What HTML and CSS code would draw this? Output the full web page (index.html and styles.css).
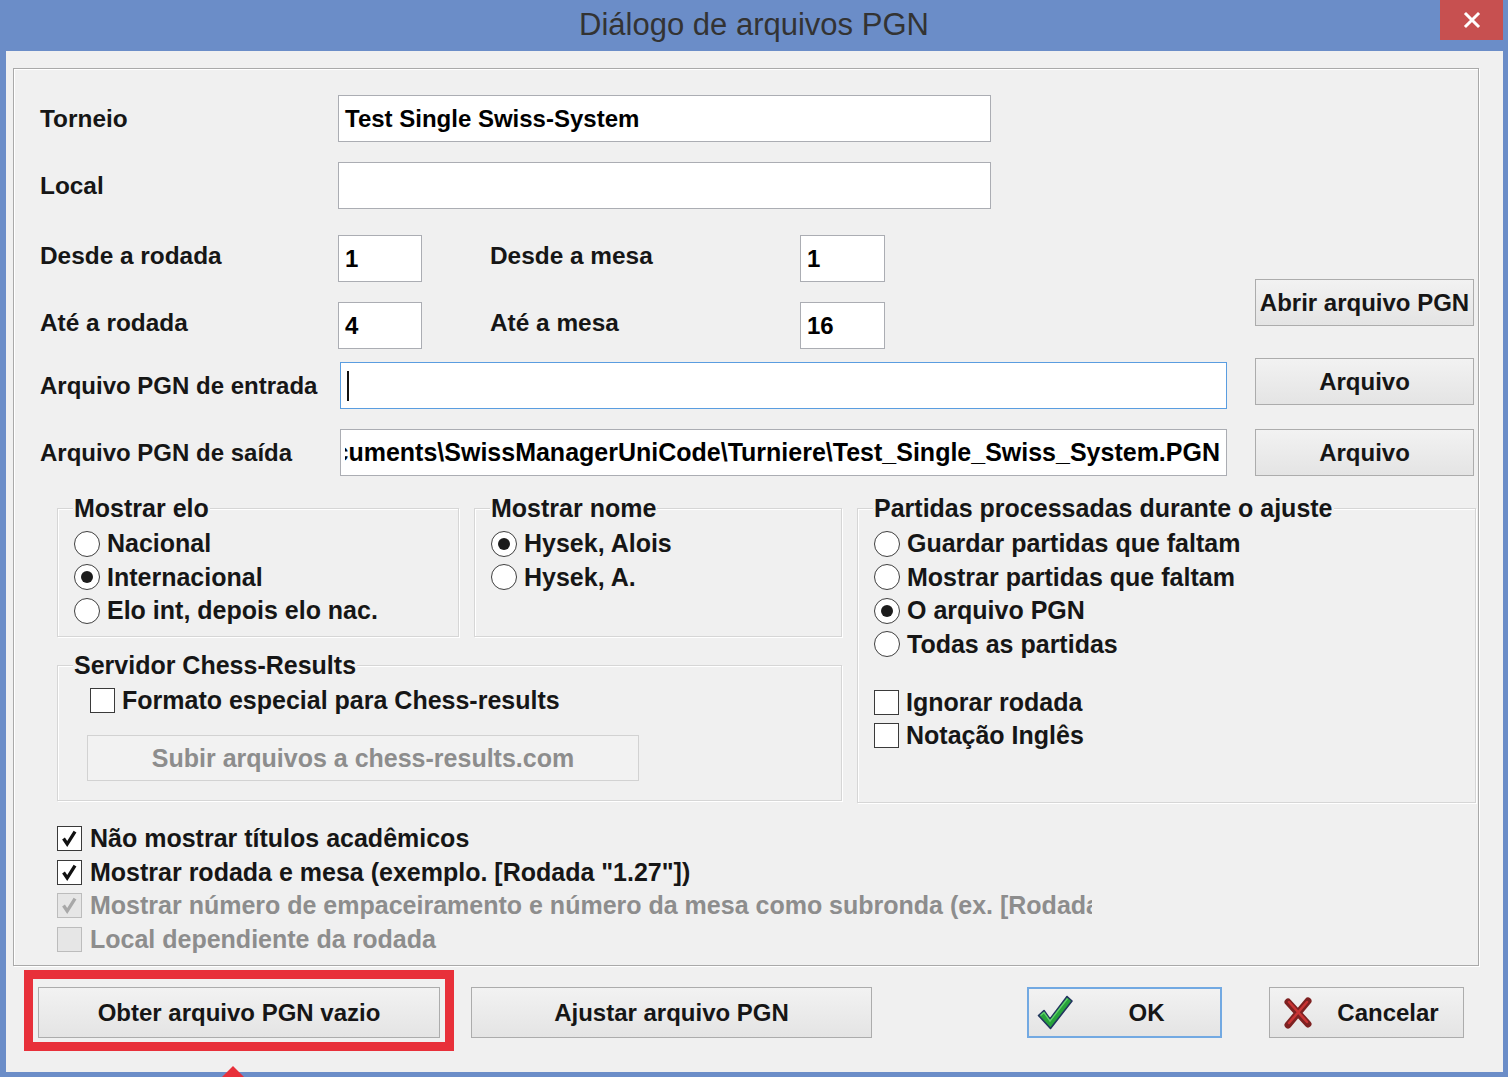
FILE: index.html
```html
<!DOCTYPE html>
<html lang="pt">
<head>
<meta charset="utf-8">
<title>Diálogo de arquivos PGN</title>
<link rel="stylesheet" href="styles.css">
</head>
<body>
<div class="window">
  <div class="titlebar">
    <div></div>
    <div class="title">Diálogo de arquivos PGN</div>
    <div class="close">
      <svg width="18" height="18" viewBox="0 0 18 18"><path d="M3 3 L15 15 M15 3 L3 15" stroke="#fff" stroke-width="3" stroke-linecap="square"/></svg>
    </div>
  </div>
  <div class="client">
    <div class="panel">
      <div class="row">
        <span class="lbl">Torneio</span>
        <div class="field f-long">Test Single Swiss-System</div>
      </div>
      <div class="row r2">
        <span class="lbl">Local</span>
        <div class="field f-long"></div>
      </div>
      <div class="range">
        <div class="range-rows">
          <div class="row">
            <span class="lbl">Desde a rodada</span>
            <div class="field f-num">1</div>
            <span class="lbl2">Desde a mesa</span>
            <div class="field f-num2">1</div>
          </div>
          <div class="row r2">
            <span class="lbl">Até a rodada</span>
            <div class="field f-num">4</div>
            <span class="lbl2">Até a mesa</span>
            <div class="field f-num2">16</div>
          </div>
        </div>
        <div class="btn btn-open">Abrir arquivo PGN</div>
      </div>
      <div class="file-row">
        <span class="lbl-file">Arquivo PGN de entrada</span>
        <div class="field f-file focus"><span class="caret"></span></div>
        <div class="btn btn-file top">Arquivo</div>
      </div>
      <div class="file-row2">
        <span class="lbl-file">Arquivo PGN de saída</span>
        <div class="field f-file"><div class="clip">cuments\SwissManagerUniCode\Turniere\Test_Single_Swiss_System.PGN</div></div>
        <div class="btn btn-file">Arquivo</div>
      </div>

      <div class="groups">
        <div class="gleft">
          <div class="gtop">
            <div class="gb gb-elo">
              <div class="gb-title">Mostrar elo</div>
              <div class="opts">
                <div class="opt"><span class="radio"></span>Nacional</div>
                <div class="opt"><span class="radio on"></span>Internacional</div>
                <div class="opt"><span class="radio"></span>Elo int, depois elo nac.</div>
              </div>
            </div>
            <div class="gb gb-nome">
              <div class="gb-title">Mostrar nome</div>
              <div class="opts">
                <div class="opt"><span class="radio on"></span>Hysek, Alois</div>
                <div class="opt"><span class="radio"></span>Hysek, A.</div>
              </div>
            </div>
          </div>
          <div class="gb gb-server">
            <div class="gb-title">Servidor Chess-Results</div>
            <div class="opt srv-opt"><span class="cb"></span>Formato especial para Chess-results</div>
            <div class="btn btn-disabled">Subir arquivos a chess-results.com</div>
          </div>
        </div>
        <div class="gb gb-partidas">
          <div class="gb-title">Partidas processadas durante o ajuste</div>
          <div class="opts">
            <div class="opt"><span class="radio"></span>Guardar partidas que faltam</div>
            <div class="opt"><span class="radio"></span>Mostrar partidas que faltam</div>
            <div class="opt"><span class="radio on"></span>O arquivo PGN</div>
            <div class="opt"><span class="radio"></span>Todas as partidas</div>
          </div>
          <div class="opts part-checks">
            <div class="opt"><span class="cb"></span>Ignorar rodada</div>
            <div class="opt"><span class="cb"></span>Notação Inglês</div>
          </div>
        </div>
      </div>

      <div class="checks">
        <div class="chk"><span class="cb"><svg viewBox="0 0 25 25" width="23" height="23"><path d="M6 12.5 L10 18.5 L18.5 5" fill="none" stroke="#111" stroke-width="3.6"/></svg></span>Não mostrar títulos acadêmicos</div>
        <div class="chk"><span class="cb"><svg viewBox="0 0 25 25" width="23" height="23"><path d="M6 12.5 L10 18.5 L18.5 5" fill="none" stroke="#111" stroke-width="3.6"/></svg></span>Mostrar rodada e mesa (exemplo. [Rodada "1.27"])</div>
        <div class="chk dis"><span class="cb cb-dis"><svg viewBox="0 0 25 25" width="23" height="23"><path d="M6 12.5 L10 18.5 L18.5 5" fill="none" stroke="#a8a8a8" stroke-width="3.6"/></svg></span>Mostrar número de empaceiramento e número da mesa como subronda (ex. [Rodada</div>
        <div class="chk dis"><span class="cb cb-dis"></span>Local dependiente da rodada</div>
      </div>
    </div>

    <div class="buttons">
      <div class="hl">
        <div class="btn btn-big">Obter arquivo PGN vazio</div>
      </div>
      <div class="btn btn-big b2">Ajustar arquivo PGN</div>
      <div class="btn btn-ok">
        <svg class="ico-ok" width="36" height="37" viewBox="0 0 36 37"><path d="M1.5 21.5 L7 16.5 L13 25 L30 2.5 L35 7 L13.5 34.5 Z" fill="#27a23b" stroke="#22355f" stroke-width="1.6" stroke-linejoin="round"/><path d="M3.5 21.5 L7 18.5 L13 27 L30.5 4.5" fill="none" stroke="#5fd06a" stroke-width="1.4"/></svg>
        <span class="btxt">OK</span>
      </div>
      <div class="btn btn-cancel">
        <svg class="ico-x" width="30" height="32" viewBox="0 0 30 32"><path d="M5 5 L25 27 M25 4 L5 28" stroke="#7e2222" stroke-width="7" stroke-linecap="round"/><path d="M6 5 L24 25 M24 5 L6 26" stroke="#c83434" stroke-width="2.5" stroke-linecap="round"/></svg>
        <span class="btxt">Cancelar</span>
      </div>
    </div>
  </div>
  <div class="arrow"></div>
</div>
</body>
</html>
```

FILE: styles.css
```css
* { box-sizing: border-box; }
html, body { margin: 0; padding: 0; }
body {
  width: 1508px;
  height: 1077px;
  overflow: hidden;
  font-family: "Liberation Sans", Arial, sans-serif;
  font-weight: bold;
  font-size: 24px;
  color: #161616;
  background: #6b8dc8;
}
.window {
  position: relative;
  width: 1508px;
  height: 1077px;
  background: #6b8dc8;
  display: flex;
  flex-direction: column;
}
.titlebar {
  height: 51px;
  flex: none;
  display: grid;
  grid-template-columns: 1fr auto 1fr;
}
.title {
  font-weight: normal;
  font-size: 31px;
  line-height: 50px;
  color: #333;
}
.close {
  justify-self: end;
  align-self: start;
  width: 63px;
  height: 40px;
  margin-right: 5px;
  background: #c75050;
  display: flex;
  align-items: center;
  justify-content: center;
}
.client {
  margin: 0 5px 0 6px;
  height: 1021px;
  background: #f0f0f0;
  padding-top: 17px;
}
.panel {
  margin-left: 7px;
  width: 1466px;
  height: 898px;
  border: 1px solid #a9a9a9;
  box-shadow: inset 1px 1px 0 #fff, 1px 1px 0 #fff;
  padding: 26px 0 0 26px;
}
.row {
  display: flex;
  align-items: center;
  height: 47px;
}
.r2 { margin-top: 20px; }
.lbl { width: 298px; flex: none; line-height: 28px; font-size: 24.4px; }
.lbl2 { width: 310px; flex: none; margin-left: 68px; line-height: 28px; font-size: 24.4px; }
.range .lbl, .range .lbl2 { margin-bottom: 6px; }
.field {
  flex: none;
  height: 47px;
  border: 1px solid #abadb3;
  background: #fff;
  padding: 0 6px;
  line-height: 45px;
  white-space: nowrap;
  overflow: hidden;
  color: #000;
}
.f-long { width: 653px; }
.f-num { width: 84px; }
.f-num2 { width: 85px; }
.range { display: flex; margin-top: 26px; }
.btn {
  display: flex;
  align-items: center;
  justify-content: center;
  flex: none;
  border: 1px solid #acacac;
  background: linear-gradient(#f2f2f2, #e4e4e4);
  color: #161616;
  white-space: nowrap;
}
.btn-open { margin-top: 44px; margin-left: 370px; width: 219px; height: 47px; }
.file-row {
  display: flex;
  align-items: flex-end;
  height: 51px;
  margin-top: 9px;
}
.file-row2 {
  display: flex;
  align-items: center;
  height: 47px;
  margin-top: 20px;
}
.lbl-file {
  width: 300px;
  flex: none;
  height: 47px;
  display: flex;
  align-items: center;
}
.f-file { width: 887px; }
.focus { border-color: #5a9de0; display: flex; align-items: center; }
.caret { width: 2px; height: 30px; background: #111; }
.clip {
  display: flex;
  justify-content: flex-end;
  overflow: hidden;
  white-space: nowrap;
  margin-left: -2px;
  font-size: 25px;
}
.btn-file { margin-left: 28px; width: 219px; height: 47px; }
.btn-file.top { align-self: flex-start; }

.groups {
  display: flex;
  gap: 15px;
  margin-top: 32px;
  margin-left: 17px;
  font-size: 25px;
}
.gleft { width: 785px; display: flex; flex-direction: column; }
.gtop { display: flex; gap: 15px; }
.gb {
  border: 1px solid #d6d6d6;
  box-shadow: inset 1px 1px 0 #fff, 1px 1px 0 #fff;
  padding: 0 0 0 16px;
}
.gb-title {
  margin-top: -15px;
  line-height: 28px;
  background: #f0f0f0;
  width: fit-content;
  padding: 0 1px;
  margin-left: -1px;
  white-space: nowrap;
}
.gb-elo { width: 402px; height: 129px; }
.gb-nome { width: 368px; height: 129px; }
.gb-partidas { width: 619px; height: 295px; }
.gb-server { width: 785px; height: 136px; margin-top: 28px; padding-left: 32px; }
.gb-server .gb-title { margin-left: -17px; }
.opts { margin-top: 5px; }
.opt {
  display: flex;
  align-items: center;
  height: 33.5px;
  gap: 7px;
  white-space: nowrap;
}
.part-checks { margin-top: 24.5px; }
.srv-opt { margin-top: 4.5px; height: 33px; }
.radio {
  width: 26px;
  height: 26px;
  flex: none;
  border-radius: 50%;
  border: 1px solid #3f3f3f;
  background: #fff;
  display: flex;
  align-items: center;
  justify-content: center;
}
.radio.on::after {
  content: "";
  width: 12px;
  height: 12px;
  border-radius: 50%;
  background: #1c1c1c;
}
.cb {
  width: 25px;
  height: 25px;
  flex: none;
  border: 1px solid #3a3a3a;
  background: #fff;
  display: flex;
  align-items: center;
  justify-content: center;
}
.cb-dis { border-color: #bcbcbc; background: #e6e6e6; }
.btn-disabled {
  width: 552px;
  height: 46px;
  margin-top: 18.5px;
  margin-left: -3px;
  border-color: #d2d2d2;
  background: #f2f2f2;
  color: #8d8d8d;
}

.checks {
  margin-top: 19px;
  margin-left: 17px;
  width: 1035px;
  overflow: hidden;
  font-size: 25px;
}
.chk {
  display: flex;
  align-items: center;
  gap: 8px;
  height: 33.5px;
  white-space: nowrap;
  overflow: hidden;
}
.chk.dis { color: #8d8d8d; }

.buttons {
  display: flex;
  align-items: flex-start;
  margin: 4px 0 0 18px;
}
.hl {
  border: 9px solid #e8303a;
  padding: 8px 5px 4px 5px;
}
.btn-big { width: 402px; height: 51px; }
.b2 { margin: 17px 0 0 17px; width: 401px; }
.btn-ok {
  margin: 17px 0 0 155px;
  width: 195px;
  height: 51px;
  border: 2px solid #72a9e2;
  justify-content: flex-start;
  padding-left: 8px;
}
.btn-cancel {
  margin: 17px 0 0 47px;
  width: 195px;
  height: 51px;
  justify-content: flex-start;
  padding-left: 13px;
}
.ico-ok, .ico-x { flex: none; }
.btxt { flex: 1; text-align: center; }
.arrow {
  position: absolute;
  left: 222px;
  top: 1066px;
  width: 0;
  height: 0;
  border-left: 11px solid transparent;
  border-right: 11px solid transparent;
  border-bottom: 11px solid #e8303a;
}
```
